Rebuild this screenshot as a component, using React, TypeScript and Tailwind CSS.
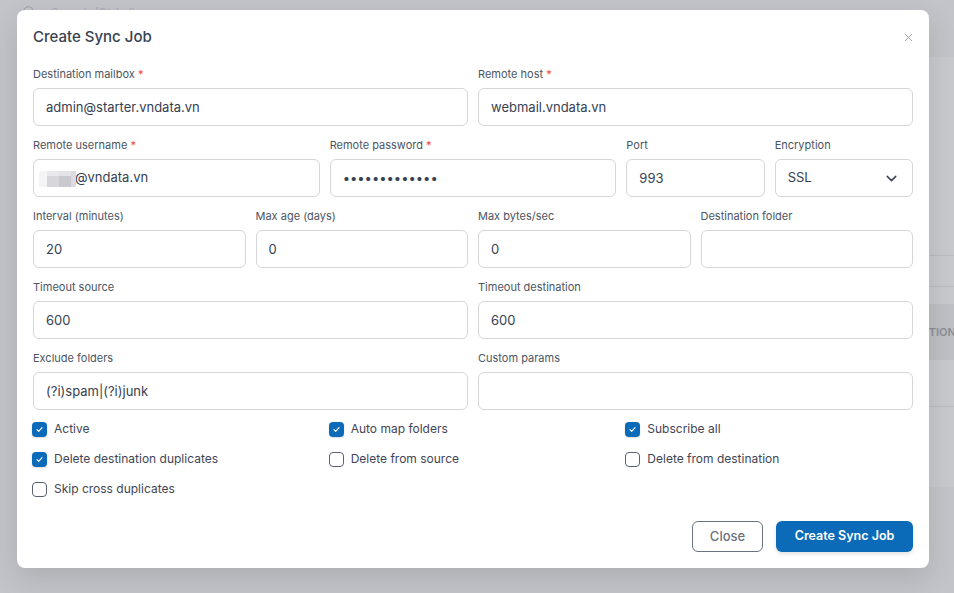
import { ChevronDown, Search, X } from "lucide-react";

type Field = {
  label: string;
  span: string;
  value?: string;
  required?: boolean;
  kind?: "text" | "password" | "select" | "masked";
};

const ROWS: Field[][] = [
  [
    { label: "Destination mailbox", span: "col-span-6", value: "admin@starter.vndata.vn", required: true },
    { label: "Remote host", span: "col-span-6", value: "webmail.vndata.vn", required: true },
  ],
  [
    { label: "Remote username", span: "col-span-4", value: "@vndata.vn", required: true, kind: "masked" },
    { label: "Remote password", span: "col-span-4", value: "xxxxxxxxxxxxx", required: true, kind: "password" },
    { label: "Port", span: "col-span-2", value: "993" },
    { label: "Encryption", span: "col-span-2", value: "SSL", kind: "select" },
  ],
  [
    { label: "Interval (minutes)", span: "col-span-3", value: "20" },
    { label: "Max age (days)", span: "col-span-3", value: "0" },
    { label: "Max bytes/sec", span: "col-span-3", value: "0" },
    { label: "Destination folder", span: "col-span-3", value: "" },
  ],
  [
    { label: "Timeout source", span: "col-span-6", value: "600" },
    { label: "Timeout destination", span: "col-span-6", value: "600" },
  ],
  [
    { label: "Exclude folders", span: "col-span-6", value: "(?i)spam|(?i)junk" },
    { label: "Custom params", span: "col-span-6", value: "" },
  ],
];

const CHECKS: { label: string; on: boolean }[] = [
  { label: "Active", on: true },
  { label: "Auto map folders", on: true },
  { label: "Subscribe all", on: true },
  { label: "Delete destination duplicates", on: true },
  { label: "Delete from source", on: false },
  { label: "Delete from destination", on: false },
  { label: "Skip cross duplicates", on: false },
];

function Box({ on }: { on: boolean }) {
  if (on) {
    return (
      <span className="flex h-[15px] w-[15px] shrink-0 items-center justify-center rounded-[4px] bg-[#0b6bb8] shadow-[0_1px_2px_rgba(0,0,0,0.15)]">
        <svg width="9" height="9" viewBox="0 0 10 10" fill="none">
          <path d="M2.2 5.2 4.1 7 7.8 3" stroke="white" strokeWidth="1.3" strokeLinecap="round" strokeLinejoin="round" />
        </svg>
      </span>
    );
  }
  return <span className="h-[15px] w-[15px] shrink-0 rounded-[4px] border border-[#5b6170] bg-white" />;
}

function Input({ f }: { f: Field }) {
  const base =
    "flex h-[38px] w-full items-center rounded-[6px] border border-[#d4d6da] bg-white px-3 text-[13px] text-[#374151]";
  if (f.kind === "select") {
    return (
      <div className={base + " justify-between pr-3"}>
        <span>{f.value}</span>
        <ChevronDown size={17} strokeWidth={2} className="text-[#374151]" />
      </div>
    );
  }
  if (f.kind === "masked") {
    return (
      <div className={base + " relative"}>
        <span className="pl-[29px]">{f.value}</span>
        <span className="absolute left-[5px] top-[11px] flex h-[16px]">
          <span className="w-[8px] bg-[#f4f4f6]" />
          <span className="flex w-[12px] flex-col">
            <span className="h-[5px] bg-[#e9e9ec]" />
            <span className="flex-1 bg-[#d6d6db]" />
          </span>
          <span className="flex w-[12px] flex-col">
            <span className="h-[5px] bg-[#e4e4e8]" />
            <span className="flex-1 bg-[#c9c9cf]" />
          </span>
          <span className="w-[5px] bg-[#dcdce0]" />
        </span>
      </div>
    );
  }
  return (
    <input
      readOnly
      type={f.kind === "password" ? "password" : "text"}
      value={f.value}
      className={base + " outline-none"}
    />
  );
}

export default function App() {
  return (
    <div className="relative h-[593px] w-[954px] overflow-hidden bg-[#c3c4c9] font-['Inter',sans-serif]">
      {/* dimmed page behind */}
      <div className="flex items-start gap-[15px] pl-[22px] pt-[5px] text-[12px] leading-4 text-[#a9abb2]">
        <Search size={14} className="text-[#9a9ca4]" />
        <span>Search (Ctrl+/)</span>
      </div>
      <div className="absolute left-[600px] top-[57px] flex h-[430px] w-[400px] flex-col rounded-[8px] bg-[#c8c9cd]">
        <div className="h-[199px] border-b border-[#bbbcc1]" />
        <div className="h-[31px] border-b border-[#bbbcc1]" />
        <div className="h-[17px]" />
        <div className="flex h-[56px] items-center bg-[#bfc0c5] pl-[313px] text-[11px] font-semibold text-[#8c8e95]">
          ACTION
        </div>
        <div className="h-[47px] border-b border-[#bbbcc1]" />
      </div>

      {/* modal */}
      <div className="absolute left-[17px] top-[10px] flex w-[912px] flex-col rounded-[8px] bg-white px-4 pb-4 pt-[17px] shadow-[0_10px_30px_rgba(0,0,0,0.12)]">
        <div className="flex h-5 items-center justify-between">
          <h2 className="text-[15px] font-medium text-[#374151]">Create Sync Job</h2>
          <X size={13} strokeWidth={1.5} className="mr-[-2px] text-[#8e919a]" />
        </div>

        <div className="mt-[19px] flex flex-col gap-y-[11px]">
          {ROWS.map((row, i) => (
            <div key={i} className="grid grid-cols-12 gap-x-[10px]">
              {row.map((f) => (
                <div key={f.label} className={f.span}>
                  <div className="mb-[6px] h-4 text-[11px] leading-4 text-[#4b5563]">
                    {f.label}
                    {f.required && <span className="text-[#ef4444]"> *</span>}
                  </div>
                  <Input f={f} />
                </div>
              ))}
            </div>
          ))}
        </div>

        <div className="mt-[9px] grid grid-cols-3 gap-x-[10px] gap-y-[10px]">
          {CHECKS.map((c) => (
            <div key={c.label} className="-ml-px flex h-5 items-center gap-[7px] text-[12px] text-[#3f4555]">
              <Box on={c.on} />
              <span>{c.label}</span>
            </div>
          ))}
        </div>

        <div className="mt-[22px] flex justify-end gap-[13px]">
          <button className="h-[31px] w-[71px] rounded-[6px] border border-[#6b7280] text-[13px] font-medium text-[#6b7280]">
            Close
          </button>
          <button className="h-[31px] w-[137px] rounded-[6px] bg-[#0b6bb8] text-[12.5px] font-semibold text-white shadow-[0_2px_4px_rgba(0,0,0,0.12)]">
            Create Sync Job
          </button>
        </div>
      </div>
    </div>
  );
}
